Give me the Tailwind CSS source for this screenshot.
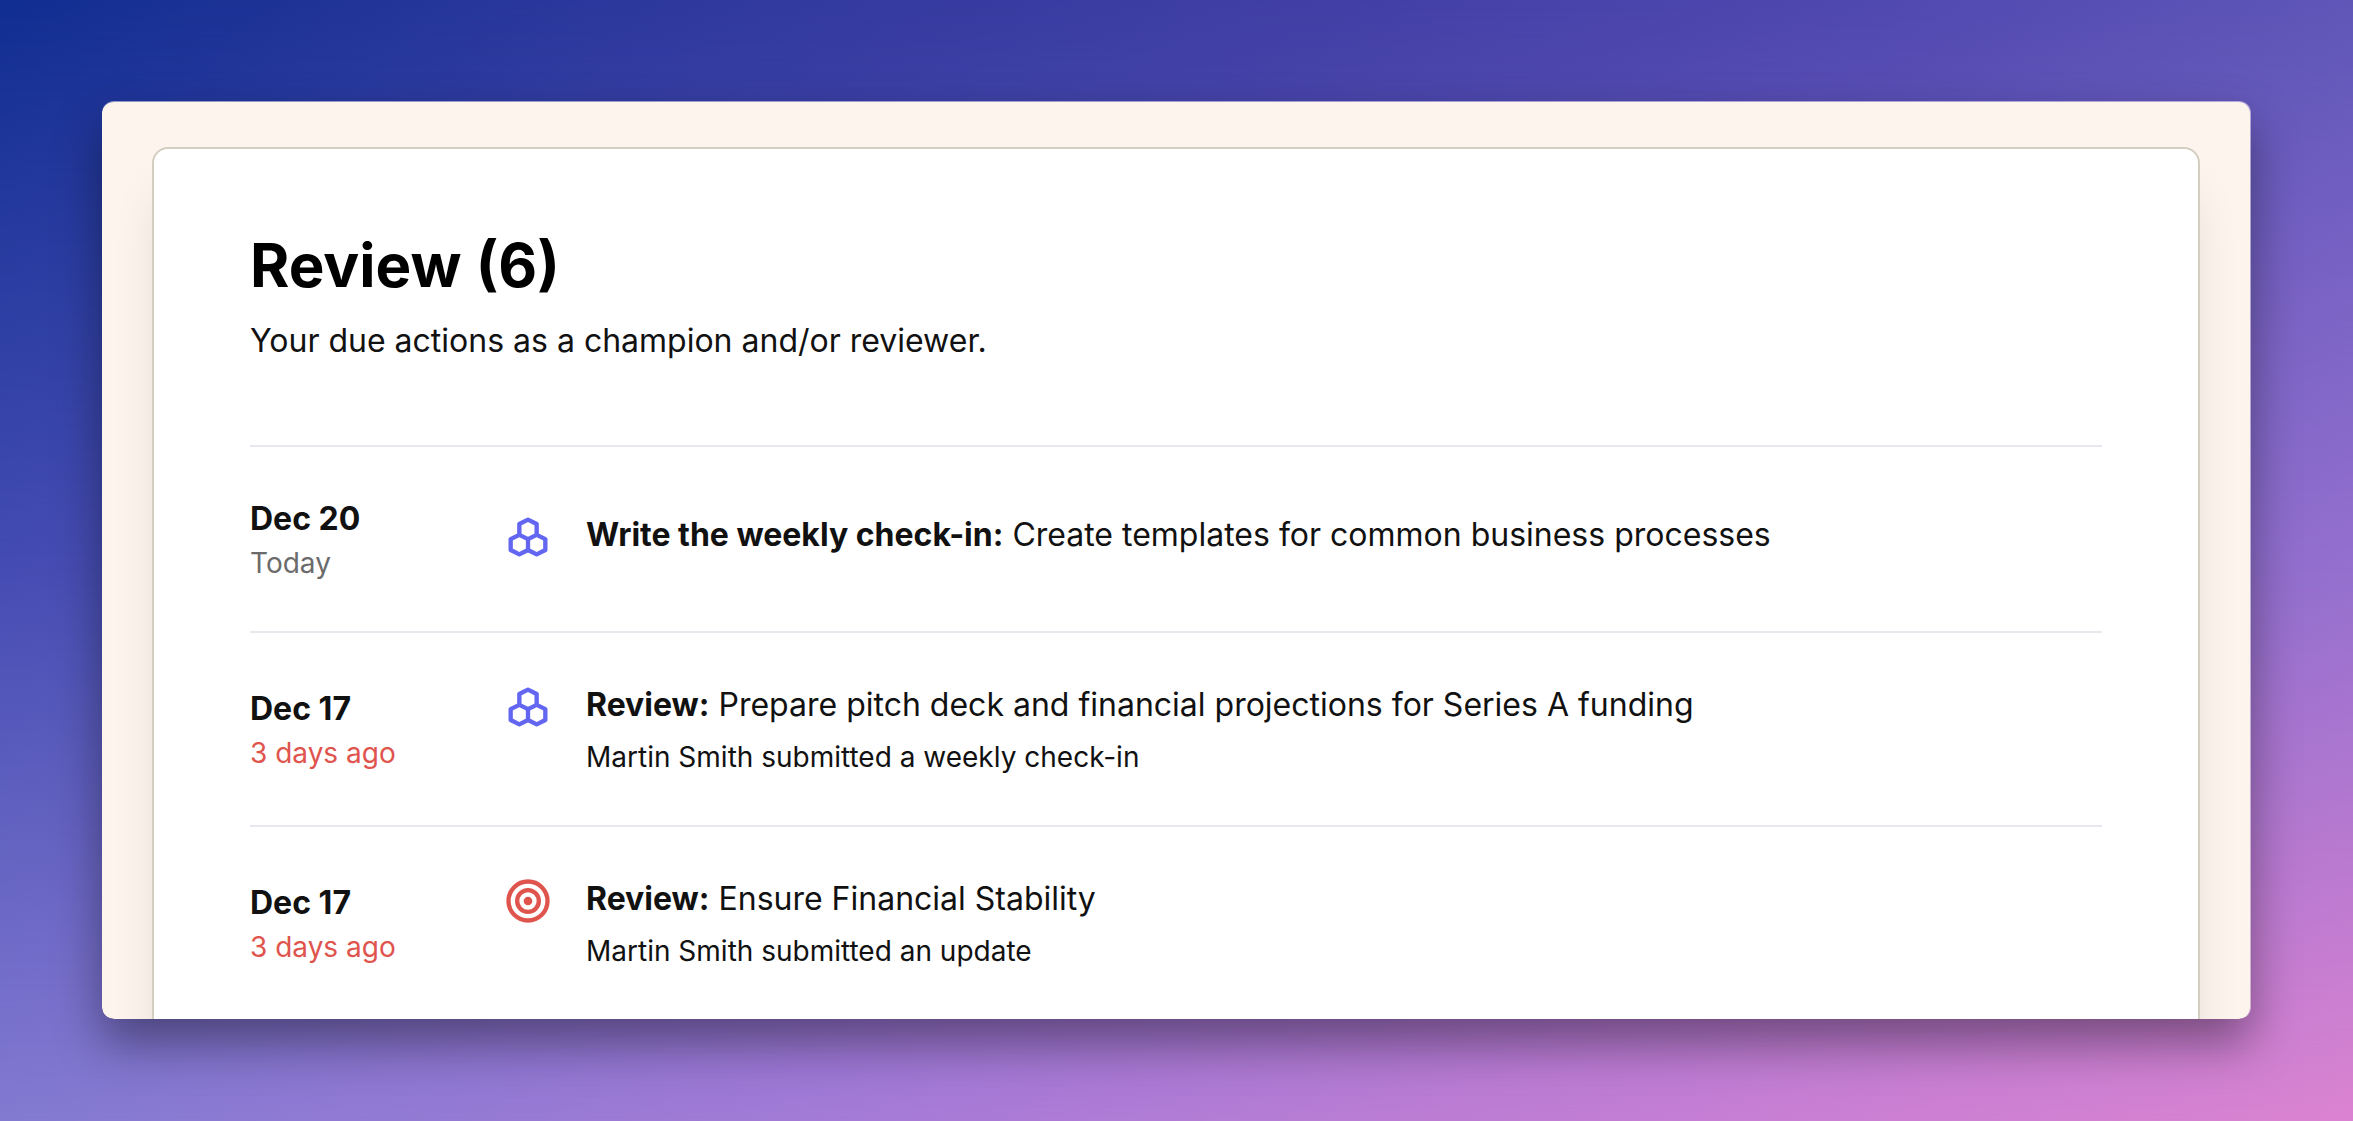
<!DOCTYPE html>
<html lang="en">
<head>
<meta charset="utf-8">
<meta name="viewport" content="width=device-width, initial-scale=1">
<title>Review</title>
<script src="https://cdn.jsdelivr.net/npm/@tailwindcss/browser@4"></script>
</head>
<body class="font-['Inter',sans-serif] text-[#111111]">
<svg class="hidden">
  <symbol id="hexagons" viewBox="0 0 24 24"><path d="M4 18v-5l4 -2l4 2v5l-4 2z"/><path d="M8 11v-5l4 -2l4 2v5"/><path d="M12 13l4 -2l4 2v5l-4 2l-4 -2"/></symbol>
  <symbol id="target" viewBox="0 0 24 24"><circle cx="12" cy="12" r="1"/><circle cx="12" cy="12" r="5"/><circle cx="12" cy="12" r="9"/></symbol>
</svg>
<div class="relative isolate flex h-screen flex-col overflow-hidden bg-[linear-gradient(to_right,#112e92_0%,#2c389c_25%,#413fa5_55%,#5049b0_80%,#5f57b9_100%)] px-[102px] pt-[101px] pb-[102px]">
  <div class="absolute inset-0 -z-10 bg-[linear-gradient(to_right,#444cb2_0%,#5f58bb_50%,#9470cf_100%)] [mask-image:linear-gradient(to_bottom,transparent,black_50%)]"></div>
  <div class="absolute inset-0 -z-10 bg-[linear-gradient(to_right,#837ad1_0%,#a47bd7_35%,#c07dd4_65%,#db83d1_100%)] [mask-image:linear-gradient(to_bottom,transparent_50%,black)]"></div>

  <main class="min-h-0 flex-1 overflow-hidden rounded-xl border-t border-r border-white/50 bg-[#fcf4ed] bg-clip-padding px-[50px] pt-[45px] shadow-[0_24px_48px_rgba(0,0,0,0.4)]">
    <section class="min-h-screen rounded-2xl border-2 border-[#d3cec0] bg-white px-24 py-20 shadow-[0_40px_50px_-10px_rgba(0,0,0,0.12)]">
      <h1 class="text-[60px] leading-[72px] font-bold text-black">Review (6)</h1>
      <p class="mt-4 text-[32px] leading-[48px]">Your due actions as a champion and/or reviewer.</p>

      <ul class="mt-20">
        <li class="flex items-center border-t-2 border-[#e8e8ee] py-12">
          <div class="w-[252px] shrink-0">
            <div class="text-[32px] leading-[48px] font-bold">Dec 20</div>
            <div class="text-[28px] leading-10 text-[#6b6b6b]">Today</div>
          </div>
          <div class="flex items-start gap-8">
            <svg class="size-[52px] shrink-0 fill-none stroke-[#6366f1] stroke-2 [stroke-linecap:round] [stroke-linejoin:round]" aria-hidden="true"><use href="#hexagons"/></svg>
            <div>
              <a href="#" class="mb-2 block text-[32px] leading-[48px]"><b class="font-bold">Write the weekly check-in:</b> Create templates for common business processes</a>
            </div>
          </div>
        </li>
        <li class="flex items-center border-t-2 border-[#e8e8ee] py-12">
          <div class="w-[252px] shrink-0">
            <div class="text-[32px] leading-[48px] font-bold">Dec 17</div>
            <div class="text-[28px] leading-10 text-[#e0544e]">3 days ago</div>
          </div>
          <div class="flex items-start gap-8">
            <svg class="size-[52px] shrink-0 fill-none stroke-[#6366f1] stroke-2 [stroke-linecap:round] [stroke-linejoin:round]" aria-hidden="true"><use href="#hexagons"/></svg>
            <div>
              <a href="#" class="mb-2 block text-[32px] leading-[48px]"><b class="font-bold">Review:</b> Prepare pitch deck and financial projections for Series A funding</a>
              <div class="text-[28px] leading-10">Martin Smith submitted a weekly check-in</div>
            </div>
          </div>
        </li>
        <li class="flex items-center border-t-2 border-[#e8e8ee] py-12">
          <div class="w-[252px] shrink-0">
            <div class="text-[32px] leading-[48px] font-bold">Dec 17</div>
            <div class="text-[28px] leading-10 text-[#e0544e]">3 days ago</div>
          </div>
          <div class="flex items-start gap-8">
            <svg class="size-[52px] shrink-0 fill-none stroke-[#e0544e] stroke-2 [stroke-linecap:round] [stroke-linejoin:round]" aria-hidden="true"><use href="#target"/></svg>
            <div>
              <a href="#" class="mb-2 block text-[32px] leading-[48px]"><b class="font-bold">Review:</b> Ensure Financial Stability</a>
              <div class="text-[28px] leading-10">Martin Smith submitted an update</div>
            </div>
          </div>
        </li>
      </ul>
    </section>
  </main>
</div>
</body>
</html>
